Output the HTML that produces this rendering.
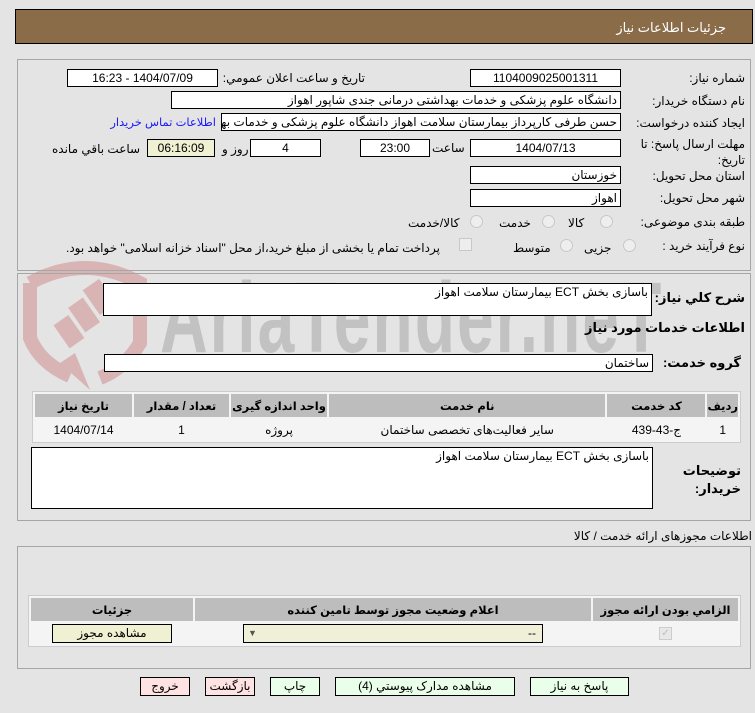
<!DOCTYPE html>
<html><head><meta charset="utf-8"><style>
*{box-sizing:border-box}
body{margin:0;width:755px;height:713px;background:#e4e4e4;font-family:"Liberation Sans","DejaVu Sans",sans-serif;font-size:12px;color:#000;position:relative;overflow:hidden}
.a{position:absolute}
.box{position:absolute;background:#fff;border:1px solid #000;height:18px;line-height:16px;padding:0 3px;direction:rtl;white-space:nowrap;overflow:hidden}
.c{text-align:center}
.lbl{position:absolute;direction:rtl;white-space:nowrap;line-height:16px}
.panel{position:absolute;left:17px;width:734px;border:1px solid #a6a6a6}
table{border-collapse:separate;border-spacing:2px;position:absolute;background:#f4f4f4;border:1px solid #ccc;direction:rtl}
td,th{padding:0;text-align:center;font-size:12px;white-space:nowrap}
th{background:#bdbdbd;font-weight:bold;height:23px;font-size:11.5px}
td{background:#f4f4f4;height:21px}
.btn{position:absolute;top:677px;height:19px;border:1px solid #000;background:#eaffea;text-align:center;line-height:17px;direction:rtl}
.red{background:#ffe2e2}
.radio{position:absolute;width:13px;height:13px;border-radius:50%;border:1px solid #c8c8c8;background:#eee}
</style></head><body>
<div class="a" style="left:15px;top:9px;width:738px;height:35px;background:#8a6c48;border:1px solid #000"></div>
<div class="lbl" style="right:29px;top:20px;color:#fff;font-size:13px">جزئیات اطلاعات نیاز</div>

<svg class="a" style="left:15px;top:258px" width="140" height="135" viewBox="0 0 140 135">
<path d="M15 25 Q70 -5 125 25 L125 85 Q110 110 85 120" fill="none" stroke="#d9b4b4" stroke-width="14"/>
<path d="M15 25 L15 80 Q25 105 55 118" fill="none" stroke="#d9b4b4" stroke-width="14"/>
<path d="M45 105 L75 132 L60 95 Z" fill="#d9b4b4"/>
<g fill="#d9b4b4" transform="rotate(-35 70 60)"><rect x="40" y="48" width="18" height="28"/><rect x="62" y="42" width="18" height="30"/><rect x="84" y="36" width="20" height="30"/></g>
</svg>
<div class="a" style="left:160px;top:268px;font-size:100px;font-weight:bold;color:#c2c2c2;transform:scaleX(0.66);transform-origin:left top;letter-spacing:3px;line-height:100px;white-space:nowrap">AriaTender.neT</div>

<div class="panel" style="top:59px;height:212px"></div>
<div class="lbl" style="right:10px;top:70px">شماره نياز:</div>
<div class="box c" style="left:470px;top:69px;width:151px">1104009025001311</div>
<div class="lbl" style="right:390px;top:70px">تاريخ و ساعت اعلان عمومي:</div>
<div class="box c" style="left:67px;top:69px;width:151px">1404/07/09 - 16:23</div>
<div class="lbl" style="right:10px;top:93px">نام دستگاه خريدار:</div>
<div class="box" style="left:171px;top:91px;width:450px">دانشگاه علوم پزشکی و خدمات بهداشتی درمانی جندی شاپور اهواز</div>
<div class="lbl" style="right:10px;top:115px">ایجاد کننده درخواست:</div>
<div class="box" style="left:221px;top:113px;width:400px">حسن طرفی کارپرداز بیمارستان سلامت اهواز دانشگاه علوم پزشکی و خدمات بهداشتی</div>
<div class="lbl" style="right:539px;top:115px;color:#1a1aff;font-size:11.5px">اطلاعات تماس خریدار</div>
<div class="lbl" style="right:10px;top:136px">مهلت ارسال پاسخ: تا</div>
<div class="lbl" style="right:10px;top:152px">تاریخ:</div>
<div class="box c" style="left:470px;top:139px;width:151px">1404/07/13</div>
<div class="lbl" style="left:432px;top:140px">ساعت</div>
<div class="box c" style="left:360px;top:139px;width:70px">23:00</div>
<div class="box c" style="left:250px;top:139px;width:71px">4</div>
<div class="lbl" style="left:222px;top:141px">روز و</div>
<div class="box c" style="left:147px;top:139px;width:68px;background:#f0f0d2">06:16:09</div>
<div class="lbl" style="left:52px;top:141px">ساعت باقي مانده</div>
<div class="lbl" style="right:10px;top:168px">استان محل تحویل:</div>
<div class="box" style="left:470px;top:166px;width:151px">خوزستان</div>
<div class="lbl" style="right:10px;top:190px">شهر محل تحویل:</div>
<div class="box" style="left:470px;top:189px;width:151px">اهواز</div>
<div class="lbl" style="right:10px;top:214px">طبقه بندی موضوعی:</div>
<div class="radio" style="left:600px;top:215px"></div><div class="lbl" style="left:568px;top:215px">کالا</div>
<div class="radio" style="left:542px;top:215px"></div><div class="lbl" style="left:499px;top:215px">خدمت</div>
<div class="radio" style="left:470px;top:215px"></div><div class="lbl" style="left:408px;top:215px">کالا/خدمت</div>
<div class="lbl" style="right:10px;top:238px">نوع فرآیند خرید :</div>
<div class="radio" style="left:623px;top:239px"></div><div class="lbl" style="left:584px;top:240px">جزیی</div>
<div class="radio" style="left:560px;top:239px"></div><div class="lbl" style="left:513px;top:240px">متوسط</div>
<div class="a" style="left:459px;top:238px;width:13px;height:13px;border:1px solid #c8c8c8;background:#eee"></div>
<div class="lbl" style="left:66px;top:240px">پرداخت تمام یا بخشی از مبلغ خرید،از محل "اسناد خزانه اسلامی" خواهد بود.</div>

<div class="panel" style="top:273px;height:248px"></div>
<div class="lbl" style="right:10px;top:290px;font-weight:bold;font-size:13px">شرح کلي نياز:</div>
<div class="box" style="left:103px;top:283px;width:549px;height:33px;background:#fff">باسازی بخش ECT بیمارستان سلامت اهواز</div>
<div class="lbl" style="right:10px;top:320px;font-weight:bold;font-size:13px">اطلاعات خدمات مورد نياز</div>
<div class="lbl" style="right:14px;top:355px;font-weight:bold;font-size:13px">گروه خدمت:</div>
<div class="box" style="left:104px;top:354px;width:549px">ساختمان</div>
<table style="left:32px;top:391px;width:709px">
<tr><th style="width:30px">ردیف</th><th style="width:98px">کد خدمت</th><th>نام خدمت</th><th style="width:96px">واحد اندازه گیری</th><th style="width:95px">تعداد / مقدار</th><th style="width:97px">تاریخ نیاز</th></tr>
<tr><td>1</td><td>ج-43-439</td><td>سایر فعالیت‌های تخصصی ساختمان</td><td>پروژه</td><td>1</td><td>1404/07/14</td></tr>
</table>
<div class="box" style="left:31px;top:447px;width:622px;height:62px">باسازی بخش ECT بیمارستان سلامت اهواز</div>
<div class="lbl" style="right:14px;top:462px;font-weight:bold;font-size:13px;line-height:18px;text-align:right">توضیحات<br>خریدار:</div>

<div class="lbl" style="right:3px;top:528px">اطلاعات مجوزهای ارائه خدمت / کالا</div>
<div class="panel" style="top:546px;height:123px"></div>
<table style="left:28px;top:595px;width:713px">
<tr><th style="width:145px">الزامي بودن ارائه مجوز</th><th>اعلام وضعیت مجوز توسط تامین کننده</th><th style="width:162px">جزئیات</th></tr>
<tr><td><div style="margin:auto;width:13px;height:13px;border:1px solid #ccc;background:#e8e8e8;color:#bbb;font-size:10px;line-height:11px">✓</div></td>
<td><div style="margin:0 auto;width:300px;height:19px;border:1px solid #000;background:#f0f0d8;text-align:right;padding:0 6px;line-height:17px;position:relative">--<span style="position:absolute;left:4px;top:0;font-size:9px;color:#555">▼</span></div></td>
<td><div style="margin:0 auto;width:120px;height:19px;border:1px solid #000;background:#f0f0d2;line-height:17px">مشاهده مجوز</div></td></tr>
</table>

<div class="btn" style="left:530px;width:99px">پاسخ به نياز</div>
<div class="btn" style="left:335px;width:180px">مشاهده مدارک پیوستي (4)</div>
<div class="btn" style="left:270px;width:50px">چاپ</div>
<div class="btn red" style="left:205px;width:50px">بازگشت</div>
<div class="btn red" style="left:140px;width:50px">خروج</div>
</body></html>
